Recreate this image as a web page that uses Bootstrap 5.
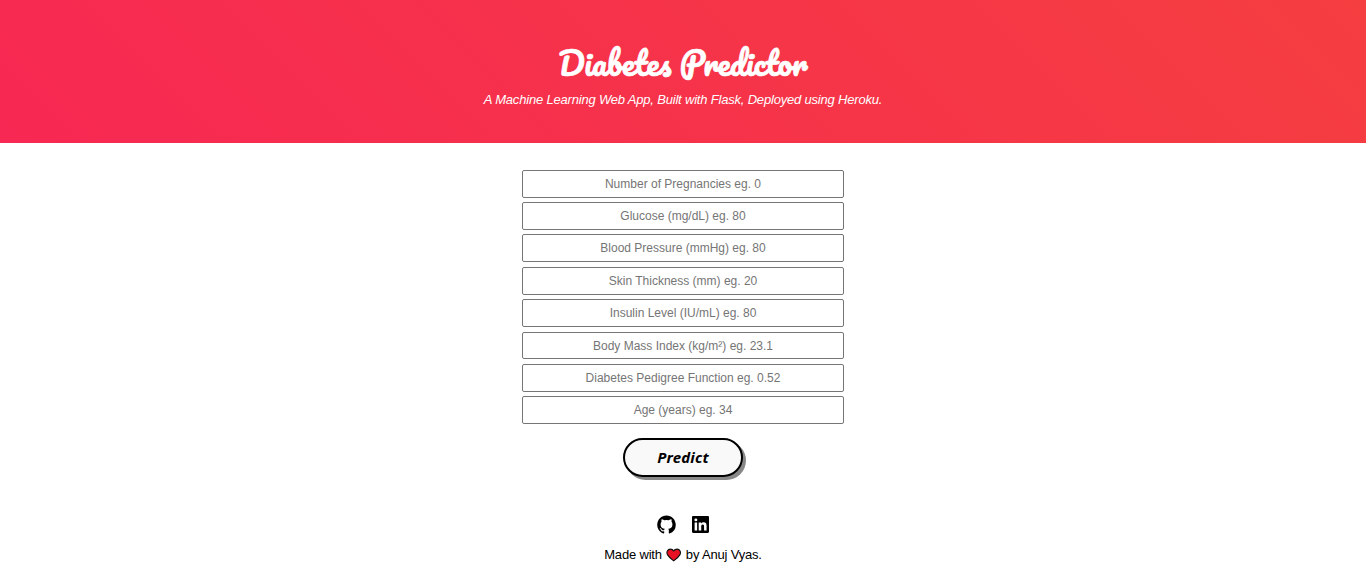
<!DOCTYPE html>
<html lang="en">
<head>
<meta charset="utf-8">
<meta name="viewport" content="width=device-width, initial-scale=1">
<title>Diabetes Predictor</title>
<link href="https://cdn.jsdelivr.net/npm/bootstrap@5.3.0/dist/css/bootstrap.min.css" rel="stylesheet">
<style>
body { font-family: "Liberation Sans", Arial, sans-serif; font-size: 13px; color: #000; overflow: hidden; }
.hero { height: 143px; padding-top: 40px; background: linear-gradient(45deg, #f72853, #f53e40); }
.hero-title { font: 400 31.5px/46px Pacifico, cursive; -webkit-text-stroke: .7px #fff; margin: 0 0 6px; }
.hero-sub { font-size: 13px; line-height: 15px; letter-spacing: -.19px; }
.fields { width: 322px; margin-top: 26.8px; gap: 4.6px; }
.fields .form-control { height: 27.75px; min-height: 0; padding: 0 2px; border: 1px solid #767676; border-radius: 2px; font-size: 12px; line-height: 15px; }
.fields .form-control::placeholder { color: #757575; opacity: 1; }
.fields .bmi { padding-top: .5px; }
.btn-predict { width: 120px; height: 39px; margin-top: 14px; padding: 0 0 1px; border: 2px solid #000; border-radius: 20px; background: #f9f9f9; color: #000; box-shadow: 3px 3px 0 #888; font: italic 700 15px/20px "Noto Sans", sans-serif; letter-spacing: .2px; }
.socials { margin-top: 38px; gap: 16px; height: 20px; }
.credit { margin-top: 12px; line-height: 16px; gap: 4px; letter-spacing: -.18px; }
</style>
</head>
<body>
<header class="hero text-center text-white">
  <h1 class="hero-title">Diabetes Predictor</h1>
  <p class="hero-sub fst-italic mb-0">A Machine Learning Web App, Built with Flask, Deployed using Heroku.</p>
</header>
<main class="d-flex flex-column align-items-center">
  <form class="d-flex flex-column align-items-center">
    <div class="fields d-flex flex-column">
      <input class="form-control text-center" placeholder="Number of Pregnancies eg. 0">
      <input class="form-control text-center" placeholder="Glucose (mg/dL) eg. 80">
      <input class="form-control text-center" placeholder="Blood Pressure (mmHg) eg. 80">
      <input class="form-control text-center" placeholder="Skin Thickness (mm) eg. 20">
      <input class="form-control text-center" placeholder="Insulin Level (IU/mL) eg. 80">
      <input class="form-control text-center bmi" placeholder="Body Mass Index (kg/m²) eg. 23.1">
      <input class="form-control text-center" placeholder="Diabetes Pedigree Function eg. 0.52">
      <input class="form-control text-center" placeholder="Age (years) eg. 34">
    </div>
    <button type="button" class="btn btn-predict">Predict</button>
  </form>
</main>
<footer class="d-flex flex-column align-items-center">
  <div class="socials d-flex align-items-center">
    <a href="#" class="d-flex" aria-label="GitHub"><svg width="19" height="19" viewBox="-.2 -.4 16.4 16.4"><path d="M8 0C3.58 0 0 3.58 0 8c0 3.54 2.29 6.53 5.47 7.59.4.07.55-.17.55-.38 0-.19-.01-.82-.01-1.49-2.01.37-2.53-.49-2.69-.94-.09-.23-.48-.94-.82-1.13-.28-.15-.68-.52-.01-.53.63-.01 1.08.58 1.23.82.72 1.21 1.87.87 2.33.66.07-.52.28-.87.51-1.07-1.78-.2-3.64-.89-3.64-3.95 0-.87.31-1.59.82-2.15-.08-.2-.36-1.02.08-2.12 0 0 .67-.21 2.2.82a7.4 7.4 0 0 1 4 0c1.53-1.04 2.2-.82 2.2-.82.44 1.1.16 1.92.08 2.12.51.56.82 1.27.82 2.15 0 3.07-1.87 3.75-3.65 3.95.29.25.54.73.54 1.48 0 1.07-.01 1.93-.01 2.2 0 .21.15.46.55.38A8.01 8.01 0 0 0 16 8c0-4.42-3.58-8-8-8z"/></svg></a>
    <a href="#" class="d-flex" aria-label="LinkedIn"><svg width="17" height="17" viewBox="0 0 448 448"><path d="M416 0H32C14 0 0 14 0 32v384c0 18 14 32 32 32h384c18 0 32-14 32-32V32c0-18-14-32-32-32zM135 384H69V170h66v214zM102 141a38 38 0 1 1 0-77 38 38 0 0 1 0 77zM384 384h-66V280c0-25 0-57-35-57s-40 27-40 55v106h-66V170h63v29h1c9-17 31-34 63-34 67 0 80 44 80 102v117z"/></svg></a>
  </div>
  <div class="credit d-flex align-items-center">
    <span>Made with</span>
    <svg width="16" height="14" viewBox="0 0 16 14"><path d="M7.7 12.9C5 11 3 9.200 1.600 6.900 0 4.200 1.600 1.100 4.300 1.100c1.600 0 2.800.8 3.400 2 .6-1.200 1.800-2 3.400-2 2.700 0 4.300 3.100 2.700 5.800-1.400 2.300-3.400 4.100-6.100 6z" fill="#e81224" stroke="#111" stroke-width="1.1" stroke-linejoin="round"/></svg>
    <span>by Anuj Vyas.</span>
  </div>
</footer>
<script src="https://cdn.jsdelivr.net/npm/bootstrap@5.3.0/dist/js/bootstrap.bundle.min.js"></script>
</body>
</html>
